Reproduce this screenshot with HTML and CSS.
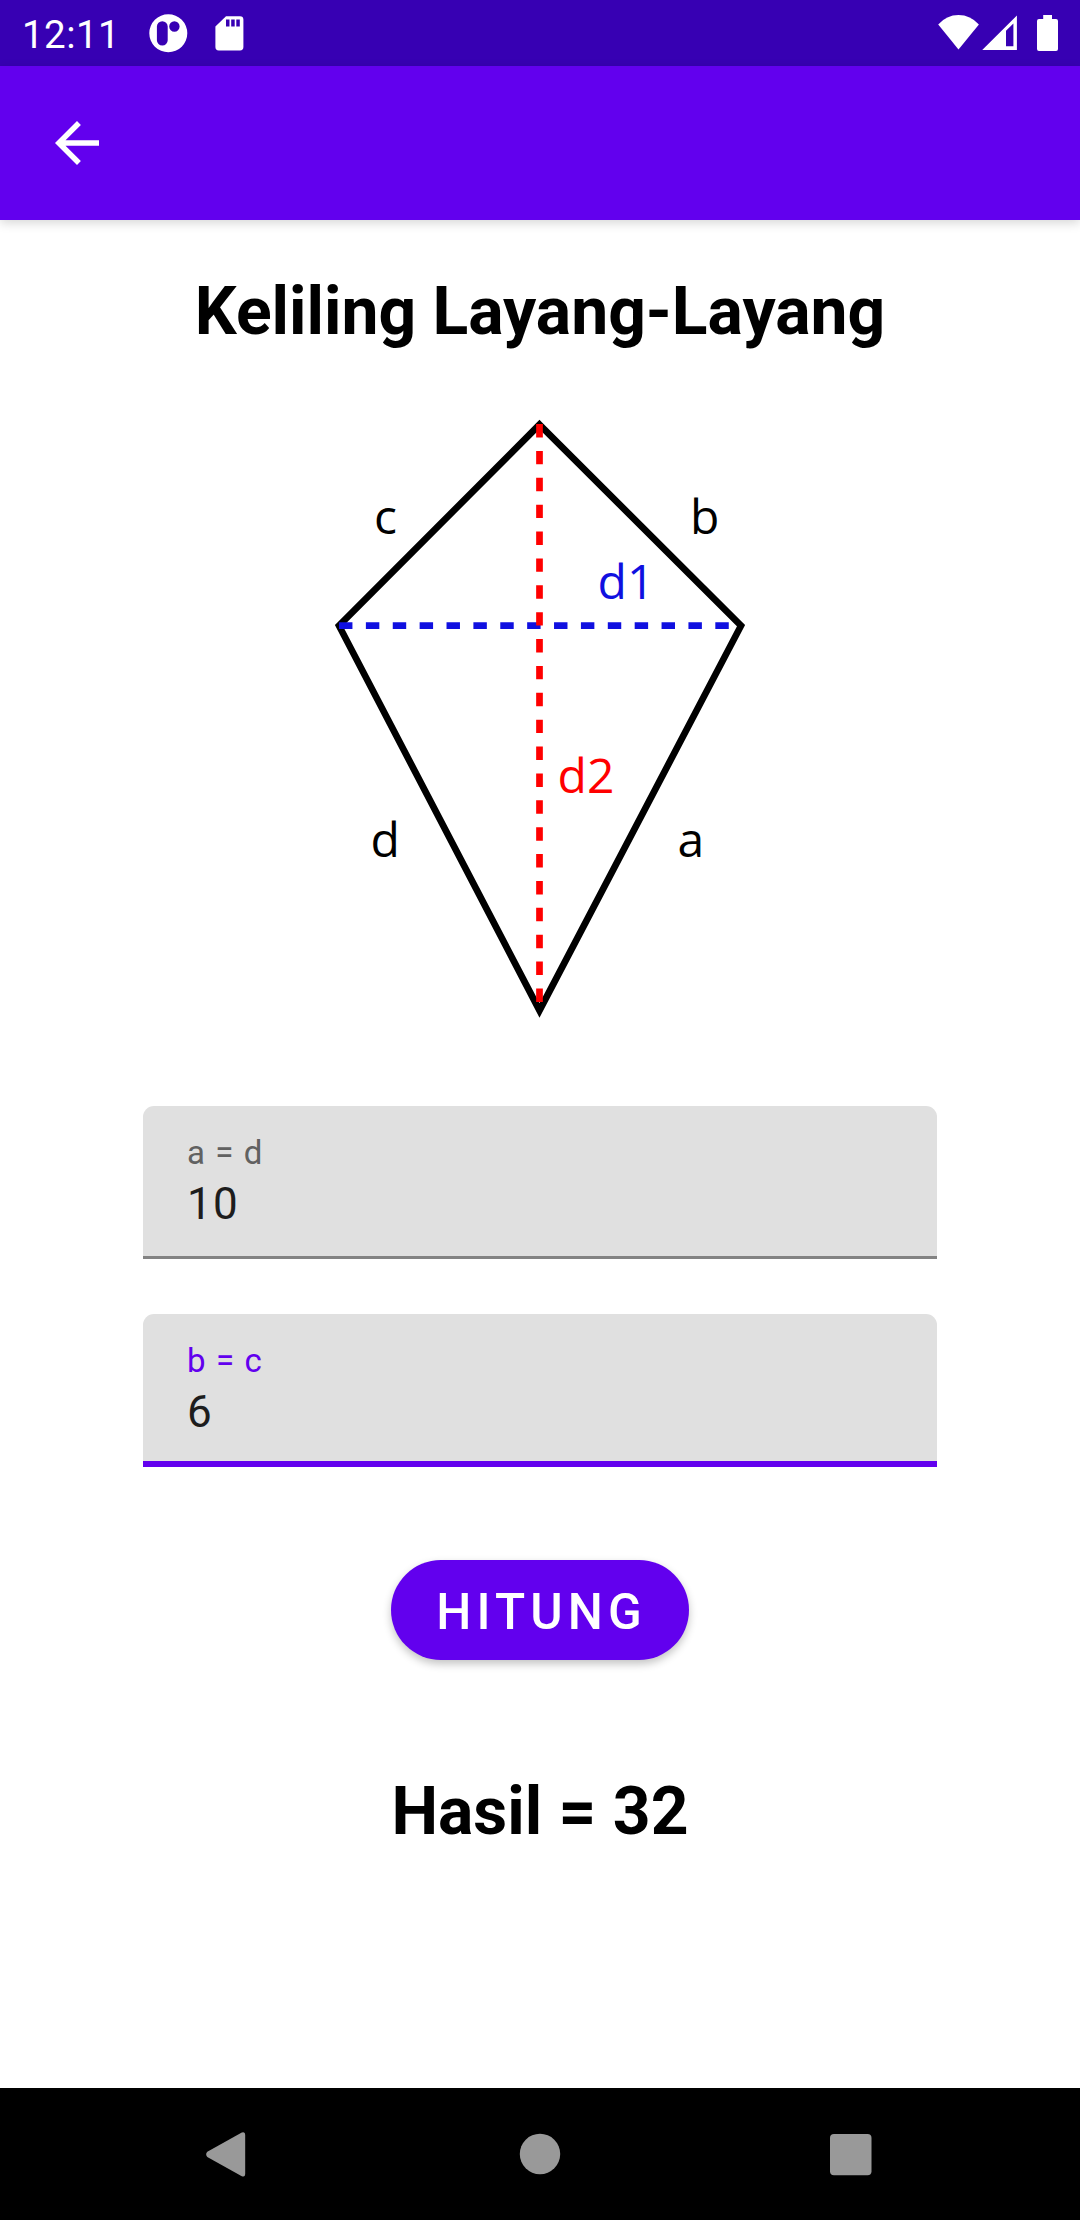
FILE: index.html
```html
<!DOCTYPE html>
<html lang="id">
<head>
  <meta charset="utf-8">
  <title>Keliling Layang-Layang</title>
  <link rel="stylesheet" href="styles.css">
</head>
<body>
  <div class="status-bar">
    <span class="clock">12:11</span>
    <svg class="status-left" viewBox="0 0 110 66" width="110" height="66">
      <path fill-rule="evenodd" d="M28.3 14.3a19 19 0 1 0 0 38a19 19 0 0 0 0-38zM22.3 21.2a5.4 5.4 0 0 1 5.4 5.4v13.6a5.4 5.4 0 0 1-10.8 0V26.6a5.4 5.4 0 0 1 5.4-5.4zM34.4 21.3a5.2 5.2 0 1 1 0 10.4a5.2 5.2 0 0 1 0-10.4z"/>
      <path fill-rule="evenodd" d="M86 16.2h14a3.4 3.4 0 0 1 3.4 3.4v27.5a3.4 3.4 0 0 1-3.4 3.4H78.8a3.4 3.4 0 0 1-3.400-3.400V26.500zM86 19.600v7h3.500v-7zM91.200 19.600v7h3.500v-7zM96.300 19.600v7h3.500v-7z"/>
    </svg>
    <svg class="status-right" viewBox="0 0 130 66" width="130" height="66">
      <path d="M8.200 24.600Q16.500 15.100 28.500 15.100T48.900 24.600L28.500 49.400z"/>
      <path fill-rule="evenodd" d="M86.900 15.400V50H52.200zM76 30.800V46.200h7.400V23.500z"/>
      <path d="M113.200 15h8.800v4h4a2 2 0 0 1 2 2v28a2 2 0 0 1-2 2h-17a2 2 0 0 1-2-2v-28a2 2 0 0 1 2-2h4.200z"/>
    </svg>
  </div>

  <header class="app-bar">
    <svg viewBox="0 0 24 24" width="66" height="66">
      <path d="M20 11H7.830l5.590-5.590L12 4l-8 8 8 8 1.410-1.410L7.830 13H20z"/>
    </svg>
  </header>

  <main class="content">
    <h1 class="heading">Keliling Layang-Layang</h1>

    <svg class="kite" viewBox="320 400 440 640" width="440" height="640">
      <path class="kite-outline" d="M539.500 424.600L741 625.700L539.500 1010.400L339 625.700z"/>
      <path class="diagonal diagonal-1" d="M339 625.700H741"/>
      <path class="diagonal diagonal-2" d="M539.500 424V1010"/>
      <text x="374" y="534">c</text>
      <text x="690" y="534">b</text>
      <text class="label-1" x="597.600" y="599">d1</text>
      <text class="label-2" x="557.600" y="792.700">d2</text>
      <text x="370.600" y="856.700">d</text>
      <text x="677.500" y="856.700">a</text>
    </svg>

    <label class="field">
      <span class="field-label">a = d</span>
      <input class="field-input" type="text" value="10">
    </label>
    <label class="field field-active">
      <span class="field-label">b = c</span>
      <input class="field-input" type="text" value="6">
    </label>

    <button class="submit" type="button">HITUNG</button>
    <p class="heading result">Hasil = 32</p>
  </main>

  <nav class="nav-bar">
    <svg viewBox="0 0 1080 132" width="1080" height="132">
      <path d="M207.300 63.800L241.800 44.600Q245.200 43.200 245.200 47V85.500Q245.200 89.600 241.800 88.200L207.300 69Q205 66.400 207.300 63.800z"/>
      <circle cx="540" cy="66" r="20.200"/>
      <rect x="830" y="46" width="41.500" height="41.300" rx="4"/>
    </svg>
  </nav>
</body>
</html>
```
FILE: styles.css
```css
* {
  box-sizing: border-box;
}

body {
  margin: 0;
  height: 2220px;
  display: flex;
  flex-direction: column;
  background: #fff;
  color: #000;
  font-family: Roboto, sans-serif;
  overflow: hidden;
}

svg {
  display: block;
}

.status-bar {
  display: flex;
  height: 66px;
  background: #3700b3;
  color: #fff;
  fill: #fff;
}

.clock {
  width: 140px;
  padding-left: 22px;
  font-size: 38.5px;
  line-height: 69px;
  letter-spacing: 0.45px;
}

.status-right {
  margin-left: auto;
  margin-right: 20px;
}

.app-bar {
  display: flex;
  align-items: center;
  height: 154px;
  padding-left: 44px;
  background: #6200ee;
  fill: #fff;
  box-shadow: 0 3px 10px rgba(0, 0, 0, 0.16);
}

.content {
  flex: 1;
  display: flex;
  flex-direction: column;
  align-items: center;
}

.heading {
  margin: 53px 0 0;
  font-size: 66px;
  font-weight: 700;
  line-height: 78px;
}

.kite {
  margin: 49px 0 66px;
  font-family: "Open Sans", sans-serif;
  font-size: 48px;
}

.kite-outline {
  fill: none;
  stroke: #000;
  stroke-width: 6.7;
}

.diagonal {
  fill: none;
  stroke-width: 6.7;
  stroke-dasharray: 13.44 13.44;
}

.diagonal-1 {
  stroke: #1010e0;
}

.diagonal-2 {
  stroke: #f00;
}

.label-1 {
  fill: #1010e0;
}

.label-2 {
  fill: #f00;
}

.field {
  display: flex;
  flex-direction: column;
  width: 794px;
  height: 153px;
  margin-bottom: 55px;
  padding: 27px 44px 0;
  border-radius: 11px 11px 0 0;
  background: #e0e0e0;
  box-shadow: inset 0 -3px #838383;
}

.field-active {
  box-shadow: inset 0 -6px #6200ee;
}

.field-label {
  color: #616161;
  font-size: 33px;
  line-height: 39px;
  letter-spacing: 1.1px;
}

.field-active .field-label {
  color: #6200ee;
}

.field-input {
  width: 100%;
  height: 52px;
  margin-top: 6px;
  padding: 0;
  border: 0;
  outline: 0;
  background: transparent;
  color: #1d1d1d;
  font: 44px/52px Roboto, sans-serif;
  letter-spacing: 1.375px;
}

.submit {
  width: 298px;
  height: 100px;
  margin-top: 38px;
  padding: 4px 0 0 3px;
  border: 0;
  border-radius: 50px;
  background: #6200ee;
  color: #fff;
  font: 500 49.5px/58px Roboto, sans-serif;
  letter-spacing: 5.1px;
  box-shadow: 0 4px 9px rgba(0, 0, 0, 0.24);
}

.result {
  margin-top: 113px;
}

.nav-bar {
  height: 132px;
  background: #000;
  fill: #999;
}
```
